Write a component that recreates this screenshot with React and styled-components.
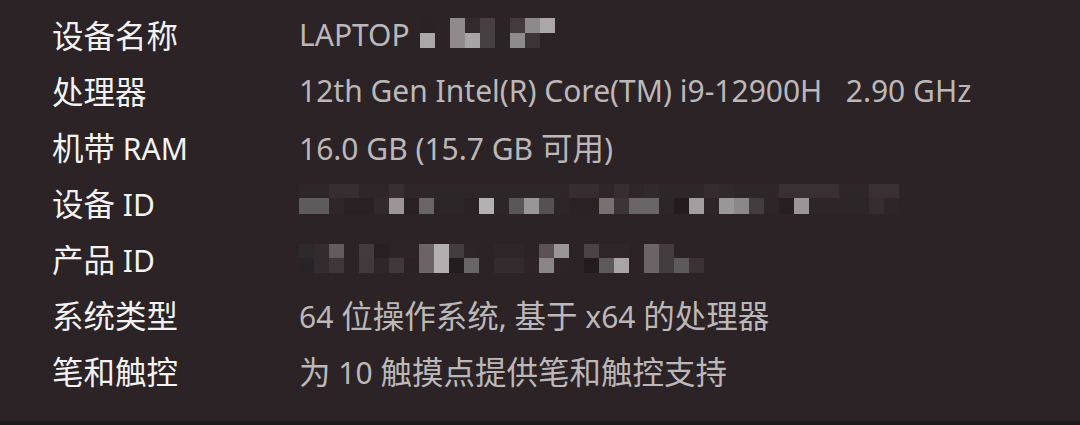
import React from "react";
import styled, { createGlobalStyle } from "styled-components";

const Global = createGlobalStyle`
  html, body { margin: 0; padding: 0; background: #2b2326; }
  body { width: 1080px; height: 425px; overflow: hidden; }
`;

const Page = styled.div`
  width: 1080px;
  height: 425px;
  box-sizing: border-box;
  background: #2b2326;
  display: flex;
  flex-direction: column;
  justify-content: space-between;
`;

const Table = styled.div`
  display: grid;
  grid-template-columns: 247px 1fr;
  grid-auto-rows: 56px;
  padding: 6px 0 0 52px;
  font-family: "Noto Sans", "Noto Sans CJK SC", sans-serif;
  font-size: 30px;
`;

const Label = styled.div`
  color: #f2f2f2;
  display: flex;
  align-items: center;
  white-space: pre;
`;

const Value = styled.div`
  color: #bcb8b9;
  display: flex;
  align-items: center;
  white-space: pre;
`;

const Han = styled.span`
  font-family: "Noto Sans CJK SC", sans-serif;
  font-size: 31.5px;
`;

const Mosaic = styled.svg`
  display: block;
  flex: none;
  margin-left: ${(p) => p.$gap || 0}px;
`;

const BottomEdge = styled.div`
  height: 4px;
  background: #1e1a1c;
`;

function Txt({ children }) {
  const parts = String(children).split(/([\u3400-\u9fff]+)/);
  return (
    <span>
      {parts.map((p, i) =>
        i % 2 === 1 ? <Han key={i}>{p}</Han> : p ? <React.Fragment key={i}>{p}</React.Fragment> : null
      )}
    </span>
  );
}

function Blocks({ width, blocks, gap }) {
  return (
    <Mosaic $gap={gap} width={width} height={56} viewBox={`0 0 ${width} 56`}>
      {blocks.map(([x, y, w, h, c], i) => (
        <rect key={i} x={x} y={y} width={w} height={h} fill={c} />
      ))}
    </Mosaic>
  );
}

const B = 15;
function cols(list, y, h) {
  return list
    .map((c, i) => (c ? [i * B, y, B, h, c] : null))
    .filter(Boolean);
}

const nameTop = [
  "#2a2225", null, "#8f8a8b", "#322a2d", "#464042", "#2b2427", "#423c3e", "#8e898a", "#aba7a8",
];
const nameBot = [
  "#aba7a8", null, "#8f8a8b", "#a8a4a5", "#464042", "#2b2427", "#8f8a8b", "#3c3537", null,
];

const idTop = [
  "#2e272a", "#2e272a", "#362e31", "#362e31", "#2f2629", "#2e272a", "#372f32", "#2e272a",
  "#2e272a", "#2e272a", "#2e272a", "#2e272a", "#2e272a", "#2e272a", "#2e272a", "#2e272a",
  "#2e272a", "#2e272a", "#352d30", "#352d30", "#2e272a", "#362e31", "#2e272a", "#302a2c",
  "#2e272a", "#2e272a", "#2e272a", "#342c2f", "#302a2c", "#2e272a", "#2e272a", "#2e272a",
  "#383033", "#383033", "#383033", "#383033", "#2e272a", "#2e272a", "#383033", "#383033",
];
const idBot = [
  "#5f5a5c", "#5f5a5c", "#2e2629", "#2a2124", "#2a2124", "#302a2d", "#9a9597", "#2a2124",
  "#6a6567", "#2d2629", "#2d2629", "#2a2225", "#b4b0b1", "#2c2628", "#5a5557", "#9a9596",
  "#555052", "#2d2629", "#2a2326", "#2a2326", "#777172", "#3b3537", "#6a6667", "#6a6667",
  "#2d2629", "#231b1e", "#a29d9f", "#2d2629", "#9b9698", "#8c8889", "#433d3f", "#2d2629",
  "#262022", "#9a9596", "#2d2629", "#2d2629", "#2d2629", "#2d2629", "#352e31", "#2d2629",
];

const pidTop = [
  "#2e2a2c", "#342b2e", "#625c5e", null, "#423c3e", "#282022", "#2d2427", "#2d2427",
  "#6a6466", "#b3afb0", "#433d3f", "#2d2528", null, "#2e2629", "#2e2629", null,
  "#5a5254", "#9a9597", null, "#4a4446", "#2e2629", "#2e2629", null, "#6a6466",
  "#433d3f", null, null,
];
const pidBot = [
  "#272326", "#342b2e", "#3f3739", null, "#403a3c", "#2e2628", "#3f393b", "#2a2325",
  "#6a6466", "#b3afb0", "#231d1f", "#6a6567", null, "#332b2e", "#332b2e", "#2c2427",
  "#8a8587", "#2c2427", null, "#231b1e", "#5e5a5c", "#a9a5a6", null, "#6a6466",
  "#433d3f", "#5e5a5b", "#3a3335",
];

const rows = [
  {
    label: "设备名称",
    value: (
      <>
        <Txt>LAPTOP</Txt>
        <Blocks
          gap={10}
          width={136}
          blocks={[...cols(nameTop, 12, 15), ...cols(nameBot, 27, 15)]}
        />
      </>
    ),
  },
  { label: "处理器", value: <Txt>{"12th Gen Intel(R) Core(TM) i9-12900H   2.90 GHz"}</Txt> },
  { label: "机带 RAM", value: <Txt>16.0 GB (15.7 GB 可用)</Txt> },
  {
    label: "设备 ID",
    value: (
      <Blocks
        width={600}
        blocks={[...cols(idTop, 10, 14), ...cols(idBot, 24, 16)]}
      />
    ),
  },
  {
    label: "产品 ID",
    value: (
      <Blocks
        width={405}
        blocks={[...cols(pidTop, 14, 14), ...cols(pidBot, 28, 15)]}
      />
    ),
  },
  { label: "系统类型", value: <Txt>64 位操作系统, 基于 x64 的处理器</Txt> },
  { label: "笔和触控", value: <Txt>为 10 触摸点提供笔和触控支持</Txt> },
];

export default function App() {
  return (
    <Page>
      <Global />
      <Table>
        {rows.map((r) => (
          <React.Fragment key={r.label}>
            <Label>
              <Txt>{r.label}</Txt>
            </Label>
            <Value>{r.value}</Value>
          </React.Fragment>
        ))}
      </Table>
      <BottomEdge />
    </Page>
  );
}
